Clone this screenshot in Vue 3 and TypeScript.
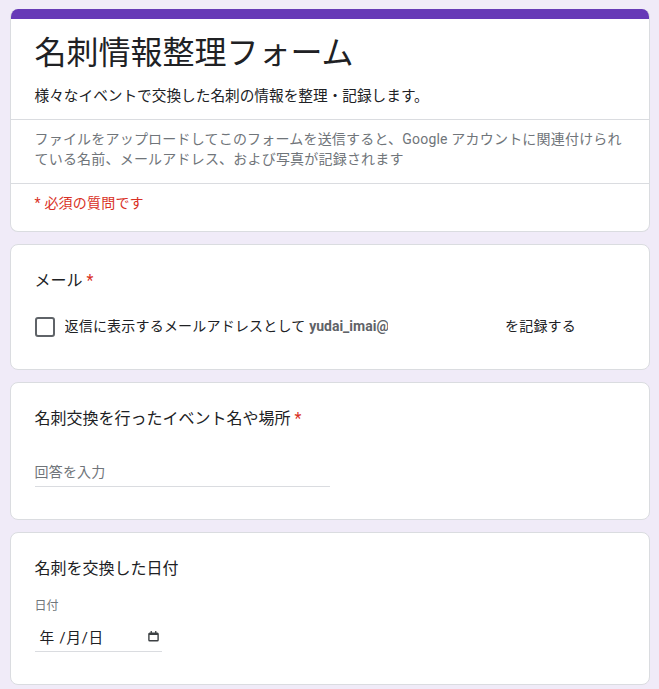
<script setup lang="ts">
const title = '名刺情報整理フォーム'
</script>

<template>
  <main class="page">
    <section class="card head">
      <div class="bar"></div>
      <div class="head-main">
        <h1>{{ title }}</h1>
        <p class="desc">様々なイベントで交換した名刺の情報を整理・記録します。</p>
      </div>
      <p class="notice">ファイルをアップロードしてこのフォームを送信すると、Google アカウントに関連付けられている名前、メールアドレス、および写真が記録されます</p>
      <p class="required">* 必須の質問です</p>
    </section>

    <section class="card q q-mail">
      <div class="q-title">メール <span class="star">*</span></div>
      <div class="check-row">
        <span class="box"></span>
        <span class="check-text">返信に表示するメールアドレスとして <b>yudai_imai@</b></span>
        <span class="check-end">を記録する</span>
      </div>
    </section>

    <section class="card q q-event">
      <div class="q-title">名刺交換を行ったイベント名や場所 <span class="star">*</span></div>
      <div class="answer">回答を入力</div>
    </section>

    <section class="card q q-date">
      <div class="q-title">名刺を交換した日付</div>
      <div class="date-label">日付</div>
      <div class="date-field">
        <span class="date-text">年 /月/日</span>
        <svg class="cal" width="11" height="12" viewBox="0 0 11 12"><path fill="none" stroke="#3c4043" stroke-width="1.4" d="M1.7 3.2h7.6a.8.8 0 0 1 .8.8v5.9a.8.8 0 0 1-.8.8H1.7a.8.8 0 0 1-.8-.8V4a.8.8 0 0 1 .8-.8z"/><path fill="#3c4043" d="M1 3h9v2H1zM2.6 1h1.3v2H2.6zM7.1 1h1.3v2H7.1z"/></svg>
      </div>
    </section>
  </main>
</template>

<style>
html, body { margin: 0; background: #f0ebf8; overflow: hidden; }
</style>

<style scoped>
.page {
  width: 640px;
  margin: 0 auto;
  padding-top: 9px;
  display: flex;
  flex-direction: column;
  gap: 12px;
  font-family: Roboto, "Noto Sans CJK JP", sans-serif;
  color: #202124;
}
.card {
  background: #fff;
  border: 1px solid #dadce0;
  border-radius: 8px;
  box-sizing: border-box;
  overflow: hidden;
}
.head { height: 223px; border-top: 0; }
.bar { height: 10px; background: #673ab7; margin: 0 -1px; }
.head-main { height: 101px; padding: 0 24px; box-sizing: border-box; border-bottom: 1px solid #dadce0; }
h1 { margin: 0; padding-top: 14px; font-size: 32px; line-height: 40px; font-weight: 400; }
.desc { margin: 13px 0 0; font-size: 14.67px; line-height: 20px; }
.notice {
  margin: 0;
  padding: 9px 24px 14px;
  height: 64px;
  box-sizing: border-box;
  border-bottom: 1px solid #dadce0;
  font-size: 14px;
  line-height: 20px;
  letter-spacing: 0.2px;
  color: #70757a;
}
.required { margin: 0; padding: 9px 24px; font-size: 14px; line-height: 20px; letter-spacing: 0.2px; color: #d93025; }
.q { padding: 24px; }
.q-mail { height: 126px; }
.q-event { height: 138px; }
.q-date { height: 153px; }
.q-title { font-size: 16px; line-height: 24px; }
.star { color: #d93025; }
.check-row { display: flex; align-items: center; margin-top: 21px; height: 24px; font-size: 14px; letter-spacing: 0.2px; }
.box { width: 20px; height: 20px; box-sizing: border-box; border: 2px solid #5f6368; border-radius: 3px; flex: none; margin: 2px 10px 0 0; }
.check-text { width: 323px; margin: 0 117px 2px 0; overflow: hidden; flex: none; white-space: nowrap; }
.check-text b { font-weight: 700; letter-spacing: 0; color: #5f6368; }
.check-end { margin-bottom: 2px; margin-left: 0.5px; }
.answer {
  width: 295.5px;
  height: 27px;
  margin-top: 29px;
  box-sizing: border-box;
  border-bottom: 1px solid #dadce0;
  font-size: 14px;
  line-height: 24px;
  letter-spacing: 0.2px;
  color: #70757a;
}
.date-label { margin-top: 17px; font-size: 12px; line-height: 16px; color: #70757a; }
.date-field {
  width: 127.5px;
  height: 33px;
  margin-top: 5px;
  padding: 2px 0 0 5px;
  box-sizing: border-box;
  border-bottom: 1px solid #dadce0;
  display: flex;
  align-items: center;
  justify-content: space-between;
  font-size: 14.67px;
  letter-spacing: 0.8px;
}
.cal { margin-right: 3px; }
</style>
